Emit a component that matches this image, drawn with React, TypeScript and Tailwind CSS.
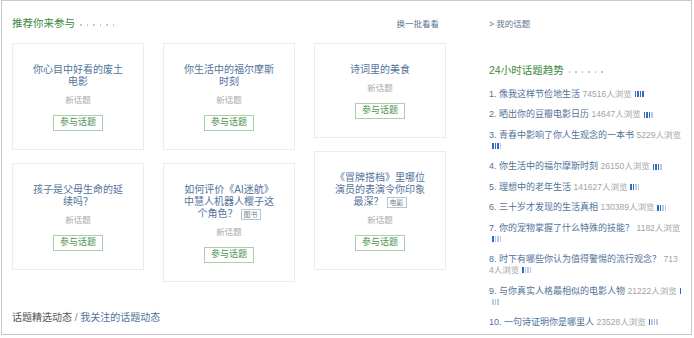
import React from "react"

interface Topic {
  lines: string[]
  tag?: string
}

interface Trend {
  no: number
  title: string
  views: string
  level: number
  wrap?: "bar" | "views" | "bar1"
  cut?: number
}

const columns: Topic[][] = [
  [
    { lines: ["你心目中好看的废土", "电影"] },
    { lines: ["孩子是父母生命的延", "续吗？"] },
  ],
  [
    { lines: ["你生活中的福尔摩斯", "时刻"] },
    { lines: ["如何评价《AI迷航》", "中慧人机器人樱子这", "个角色？"], tag: "图书" },
  ],
  [
    { lines: ["诗词里的美食"] },
    { lines: ["《冒牌搭档》里哪位", "演员的表演令你印象", "最深？"], tag: "电影" },
  ],
]

const trends: Trend[] = [
  { no: 1, title: "像我这样节俭地生活", views: "74516人浏览", level: 4 },
  { no: 2, title: "晒出你的豆瓣电影日历", views: "14647人浏览", level: 3 },
  { no: 3, title: "青春中影响了你人生观念的一本书", views: "5229人浏览", level: 3, wrap: "bar" },
  { no: 4, title: "你生活中的福尔摩斯时刻", views: "26150人浏览", level: 3 },
  { no: 5, title: "理想中的老年生活", views: "141627人浏览", level: 2 },
  { no: 6, title: "三十岁才发现的生活真相", views: "130389人浏览", level: 2 },
  { no: 7, title: "你的宠物掌握了什么特殊的技能？", views: "1182人浏览", level: 1, wrap: "bar" },
  { no: 8, title: "时下有哪些你认为值得警惕的流行观念？", views: "7134人浏览", level: 1, wrap: "views", cut: 3 },
  { no: 9, title: "与你真实人格最相似的电影人物", views: "21222人浏览", level: 1, wrap: "bar1" },
  { no: 10, title: "一句诗证明你是哪里人", views: "23528人浏览", level: 1 },
]

const Dots = () => (
  <span className="inline-flex items-center gap-[5px] ml-[5px] translate-y-[1px]">
    {[0, 1, 2, 3, 4, 5].map((i) => (
      <span key={i} className="inline-block w-[1.5px] h-[1.5px] rounded-full bg-[#b4b4b4]" />
    ))}
  </span>
)

const Bar = ({ level, from = 0, to = 4 }: { level: number; from?: number; to?: number }) => (
  <span className="inline-flex items-center gap-[1px] align-middle ml-[3px] h-[8px]">
    {[0, 1, 2, 3].slice(from, to).map((i) => (
      <span
        key={i}
        className={
          i < level
            ? "inline-block w-[1.5px] h-[6px] bg-[#2f6cc8]"
            : "inline-block w-[1.5px] h-[6px] bg-[#b7cbe9]"
        }
      />
    ))}
  </span>
)

const Card = ({ topic }: { topic: Topic }) => (
  <div className="border border-[#ececec] bg-white pt-[20px] pb-[18px] flex flex-col items-center text-center">
    <div className="text-[10px] leading-[12px] text-[#52739a] whitespace-nowrap">
      {topic.lines.map((line, i) => (
        <div key={i}>
          {line}
          {topic.tag && i === topic.lines.length - 1 && (
            <span className="inline-block align-middle ml-[3px] border border-[#b9c3cc] px-[2px] text-[7px] leading-[9px] text-[#6a8299]">
              {topic.tag}
            </span>
          )}
        </div>
      ))}
    </div>
    <div className="mt-[5px] text-[8.5px] leading-[14px] text-[#aaaaaa]">新话题</div>
    <div className="mt-[8px] w-[50px] h-[16px] border border-[#a9d0a9] flex items-center justify-center text-[9px] text-[#4a9150]">
      参与话题
    </div>
  </div>
)

const TrendItem = ({ t }: { t: Trend }) => {
  const views = <span className="text-[8.5px] text-[#a3a3a3]">{t.views}</span>
  return (
    <div className="leading-[10.5px] whitespace-nowrap text-[9px] text-[#52739a]">
      <div>
        {t.no}. {t.title}{" "}
        {t.wrap === "views" ? (
          <span className="text-[8.5px] text-[#a3a3a3]">{t.views.slice(0, t.cut)}</span>
        ) : (
          views
        )}
        {!t.wrap && <Bar level={t.level} />}
        {t.wrap === "bar1" && <Bar level={t.level} to={1} />}
      </div>
      {t.wrap === "bar" && (
        <div>
          <Bar level={t.level} />
        </div>
      )}
      {t.wrap === "views" && (
        <div>
          <span className="text-[8.5px] text-[#a3a3a3]">{t.views.slice(t.cut)}</span>
          <Bar level={t.level} />
        </div>
      )}
      {t.wrap === "bar1" && (
        <div>
          <Bar level={t.level} from={1} />
        </div>
      )}
    </div>
  )
}

const App = () => {
  return (
    <div className="w-[694px] h-[338px] bg-white font-[family-name:'Liberation_Sans','Noto_Sans_CJK_SC',sans-serif]">
      <div className="ml-[1px] w-[691px] h-[335px] border border-[#c8c8c8] flex">
        <div className="w-[445px] pl-[10px] pt-[16px] flex flex-col">
          <div className="flex items-center justify-between pr-[8px] h-[14px]">
            <div className="flex items-center text-[10.5px] text-[#3a8a40]">
              推荐你来参与
              <Dots />
            </div>
            <div className="text-[8.5px] text-[#5b7591]">换一批看看</div>
          </div>

          <div className="mt-[12px] flex items-start gap-[19px]">
            {columns.map((col, ci) => (
              <div key={ci} className="w-[132px] flex flex-col gap-[13px]">
                {col.map((topic, i) => (
                  <Card key={i} topic={topic} />
                ))}
              </div>
            ))}
          </div>

          <div className="mt-[29px] text-[10px] leading-[14px] text-[#555555]">
            话题精选动态 <span className="text-[#888888]">/</span>{" "}
            <span className="text-[#52739a]">我关注的话题动态</span>
          </div>
        </div>

        <div className="flex-1 pl-[42px] pr-[2px] pt-[16px]">
          <div className="h-[14px] flex items-center text-[8.5px] text-[#5b7591]">&gt; 我的话题</div>
          <div className="mt-[33px] h-[14px] flex items-center text-[10.5px] text-[#3a8a40]">
            24小时话题趋势
            <Dots />
          </div>
          <div className="mt-[10.5px] flex flex-col gap-[10.2px]">
            {trends.map((t) => (
              <TrendItem key={t.no} t={t} />
            ))}
          </div>
        </div>
      </div>
    </div>
  )
}

export default App
